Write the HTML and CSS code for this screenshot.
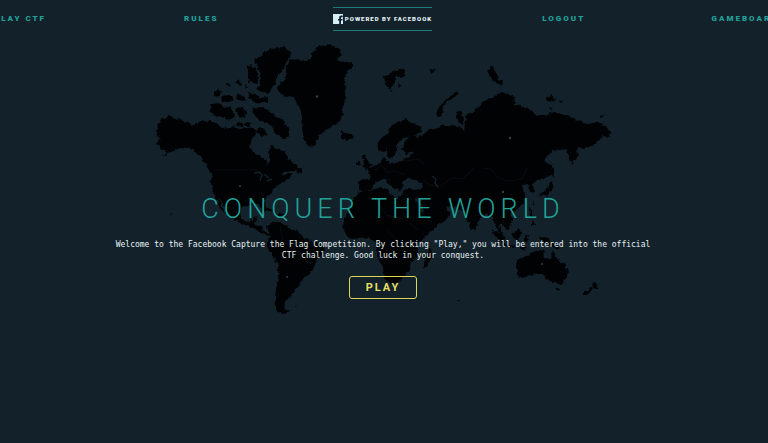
FILE: index.html
```html
<!DOCTYPE html>
<html lang="en">
<head>
<meta charset="utf-8">
<title>Conquer the World</title>
<link rel="stylesheet" href="styles.css">
</head>
<body>
<svg class="world" viewBox="0 0 768 443" aria-hidden="true">
  <defs>
    <filter id="coast" x="0" y="0" width="768" height="443" filterUnits="userSpaceOnUse" color-interpolation-filters="sRGB">
      <feTurbulence type="fractalNoise" baseFrequency="0.22" numOctaves="2" seed="4" result="n"/>
      <feDisplacementMap in="SourceGraphic" in2="n" scale="5" xChannelSelector="R" yChannelSelector="G"/>
    </filter>
  </defs>
  <g class="land" filter="url(#coast)">
    <!-- North America -->
    <path d="M158 124L162 119 170 116 178 119 188 123 194 124 201 121 211 121 216 124 222 128 232 127 240 129 248 128 256 130 257 134 251 140 249 147 254 153 262 157 266 160 268 166 270 160 269 152 272 145 277 149 284 151 288 158 294 164 298 168 292 171 284 172 281 176 290 173 293 175 286 180 280 184 275 187 270 194 264 200 267 210 264 213 259 204 252 204 244 206 240 212 242 220 248 222 254 217 257 218 255 225 262 226 264 232 269 233 270 236 262 234 254 228 244 225 234 220 228 211 220 200 216 195 222 206 225 214 219 206 213 192 211 182 212 174 207 167 203 160 197 152 188 148 180 147 174 151 168 153 161 157 168 151 161 149 157 144 159 138 157 132z"/>
    <path d="M296 168l6 1v4l-5-1zM262 207l7 1 6 4-6-1zM278 213l6 1-1 3-5-1z"/>
    <path d="M211 104l8-1 4 3 8 2 3 7-1 5-8-1-5-4-6 1-4-5zM214 92l5-3 3 2-3 5-5 1zM221 96l9-1 4 4-5 3-7-1zM226 84l5 1-2 3zM236 80l5 2 1 4-5-1zM238 94l6 2 2 5-5 1-4-4zM245 84l3 3-2 2zM249 92l6 2 5 4 8-1v6l-13-1-6-4zM236 108l7-1 3 5-1 6-7-1zM246 122l6 1-3 4-4-2z"/>
    <path d="M252 108l10-1 8 4 6 6 7 3 5 8 1 7-5 4-6-5-4-1-1-6-6-5-7-1-6-6zM258 128l6 1 4 6-6 1-5-4zM238 122l6 2-1 3-7-2z"/>
    <path d="M247 67l5-2 5 5 1 8-2 6-7-2-2-8zM254 60L262 54 270 49 283 48 290 51 291 56 286 62 283 70 277 76 275 83 272 88 267 95 258 90 260 82 261 74 256 66z"/>
    <!-- Greenland and Iceland -->
    <path d="M286 65L290 60 298 59 304 61 311 60 311 54 319 46 333 45 341 51 341 56 336 59 343 62 352 62 352 67 347 73 344 80 346 92 344 104 342 115 339 122 333 126 320 134 314 146 309 147 304 140 302 129 303 116 298 104 293 97 282 95 278 88 282 81 286 76z"/>
    <path d="M341 131l4 1 7 1 1 4-6 4-6-3z"/>
    <!-- South America -->
    <path d="M267 226l7-5 7 2 8 5 11 4 4 7 9 2 9 4 2 7-7 8-4 10-8 7-6 9-6 6-3 6-5 4-1 6 6 4-7 2-7-5-1-13 3-16v-16l-6-8-6-11 4-7zM294 305l4 1-2 1z"/>
    <!-- Africa and Madagascar -->
    <path d="M352 202l7-10 10-1 10-3 8 1 2 5 9 4 6-3 9 1 4 6 6 11 6 9 8-1-2 7-9 8-9 9 1 9-6 8-4 10-9 10-9 2-5-5-2-11-5-11-3-15-6-5-9 1-9 1-8-9 1-10zM431 248l1 6-4 12-4 1 1-11z"/>
    <!-- Eurasia -->
    <path d="M359 184L359 180 360 179 369 180 370 174 366 169 373 167 380 162 385 157 386 161 391 164 400 162 405 158 411 156 414 152 406 154 402 150 405 143 409 137 403 138 396 145 397 151 393 156 390 159 387 156 387 149 383 152 378 149 377 143 384 137 390 128 398 122 406 118 413 123 421 127 422 132 415 134 418 137 424 135 428 130 437 127 447 125 458 126 464 131 466 116 475 110 483 102 493 97 501 92 513 95 514 104 530 109 537 116 555 112 573 118 587 124 598 122 606 127 612 132 609 137 602 136 598 142 587 148 577 147 578 157 572 164 568 155 567 149 560 150 552 151 544 161 551 165 552 174 545 178 537 181 533 183 534 192 529 193 529 184 522 185 524 194 524 203 518 209 510 213 513 221 508 230 501 223 499 226 505 240 501 239 497 228 492 218 487 213 479 219 475 230 471 228 466 216 462 209 453 208 446 206 448 210 451 213 446 220 435 228 430 224 424 211 420 199 412 198 403 197 402 191 407 189 416 190 423 188 422 183 414 180 408 177 403 181 404 186 400 191 396 187 389 179 383 178 377 182 373 188 365 192 359 190z"/>
    <path d="M387 178l7 6 4 4-3 1-8-7zM362 155l4 1 1 5 5 5-4 2-6-1 2-4zM357 162l3-1v4l-3 1z"/>
    <path d="M384 76l5-1 3-3 4 1v8l-3 4-2 6-6-7zM393 71l6-2 6 2v5l-6 1zM398 84l3 1-2 4zM429 69l7 1-5 4zM436 115l3-8 7-7 11-8 1 3-8 5-7 7-2 10zM456 112l5-1 3 7-2 8-5-6zM487 70l5-4 3 4 4 9 4 4-2 3-4-3-6-4zM546 97l6-2 3 6-8 1zM557 100l6 1-3 2zM549 107l5 1-3 2zM598 116l6-1-3 3z"/>
    <path d="M552 162l2 9-1 7-2-2zM550 182l3 1-1 7-6 5-8 1 5-4 5-3zM533 200l2 4-2 1zM529 205l3 7 2 6-4-3z"/>
    <!-- South-east Asia and Oceania -->
    <path d="M492 229l6 4 7 9-3 1-7-7zM504 244l12 2-1 2-11-2zM511 234l8-5 3 3-4 8-6-1zM524 235l6-1-3 3 1 6-4-1zM540 237l7 2 8 4 5 6-7-2-6-4-7-3zM518 247l9 1-4 2zM532 220l3 5-3 1z"/>
    <path d="M516 261l9-4 6-3 6-4 8 1-2 6 7 3 3-9 5 8 7 6 4 7-4 8-5 4-6-1-8-6-7-4-10 3-6 2-6-2zM555 287l5 1-3 4zM593 281l5 4-1 3-5-1zM592 287l1 3-9 6-1-2z"/>
    <path d="M457 300l4 1-3 1zM170 213l3 1-2 1z"/>
  </g>
  <g class="borders">
    <path d="M213 170h42l7 3M482 168l9 1 6 8 11 4 14-2 5-11M397 151l8 10 13-2 6 5M375 170l7-5 5 8 8-2 10 4M423 180l7 5 10 2 11-9 12 1 12-12M280 226l3 15 12 8M374 197l12 18 17 4M404 199v19l14 12M386 230l14 13 14-2"/>
  </g>
  <path class="lakes" d="M254 173l5-1 3 3-2 6m4-7l5 4m-2 3l5-2M432 176l4 3-1 4 3 4M405 185l6-2 10 1"/>
  <g class="markers">
    <circle cx="317" cy="96.500" r="1.200"/><circle cx="510" cy="138" r="1.200"/><circle cx="503" cy="192" r="1.200"/><circle cx="240" cy="186" r="1"/><circle cx="287" cy="277" r="1"/><circle cx="542" cy="264" r="1"/>
  </g>
</svg>

<nav class="nav" aria-label="Main">
  <a href="#play">Play CTF</a>
  <a href="#rules">Rules</a>
  <a class="brand" href="#home">
    <svg class="mark" viewBox="0 0 10 10" aria-hidden="true"><path fill-rule="evenodd" d="M0 0h10v10H8V6.500h1.400L9.600 5H8V4c0-.6.2-.8.800-.8h.9V1.600H8.300C6.800 1.600 6.200 2.400 6.200 3.700V5H5v1.500h1.200V10H0z"/></svg>
    <span>Powered by Facebook</span>
  </a>
  <a href="#logout">Logout</a>
  <a href="#gameboard">Gameboard</a>
</nav>

<main class="hero">
  <h1>Conquer the World</h1>
  <p>Welcome to the Facebook Capture the Flag Competition. By clicking "Play," you will be entered into the official CTF challenge. Good luck in your conquest.</p>
  <button class="play" type="button">Play</button>
</main>
</body>
</html>
```
FILE: styles.css
```css
* {
  box-sizing: border-box;
}

body {
  margin: 0;
  min-height: 100vh;
  overflow-x: hidden;
  background: #13212b;
  color: #e8f4f5;
  font-family: Roboto, "Liberation Sans", sans-serif;
}

.world {
  position: absolute;
  top: 0;
  left: 0;
  z-index: -1;
  width: 100%;
}

.land {
  fill: #010203;
}

.borders {
  fill: none;
  stroke: #0b151a;
  stroke-width: 0.6;
}

.lakes {
  fill: none;
  stroke: #13212b;
  stroke-width: 1.4;
}

.markers {
  fill: #3c4144;
}

.nav {
  display: grid;
  grid-template-columns: repeat(5, 1fr);
  align-items: center;
  justify-items: center;
  width: 118%;
  margin-left: -9.2%;
  padding-top: 7px;
}

.nav a {
  color: #22a199;
  font-size: 8px;
  font-weight: 900;
  line-height: 12px;
  letter-spacing: 2px;
  text-transform: uppercase;
  text-decoration: none;
  white-space: nowrap;
}

.nav .brand {
  display: flex;
  align-items: center;
  gap: 2px;
  padding: 5px 0;
  border-top: 1px solid #1c7c7b;
  border-bottom: 1px solid #1c7c7b;
  color: #e3f6f9;
  font-size: 6px;
  letter-spacing: 1px;
}

.mark {
  width: 10px;
  height: 10px;
  fill: #d5eef5;
}

.hero {
  display: flex;
  flex-direction: column;
  align-items: center;
  padding: 160px 18px 0 16px;
  text-align: center;
}

h1 {
  margin: 0;
  color: #22a199;
  font-size: 27px;
  font-weight: 300;
  line-height: 36px;
  letter-spacing: 5px;
  text-transform: uppercase;
}

p {
  max-width: 540px;
  margin: 12px 0 15px;
  font-family: "DejaVu Sans Mono", "Liberation Mono", monospace;
  font-size: 8px;
  line-height: 11px;
}

.play {
  padding: 0 16px;
  border: 1px solid #dcd655;
  border-radius: 3px;
  background: transparent;
  color: #e5df65;
  font-family: inherit;
  font-size: 11px;
  font-weight: 700;
  line-height: 21px;
  letter-spacing: 2px;
  text-transform: uppercase;
}
```
